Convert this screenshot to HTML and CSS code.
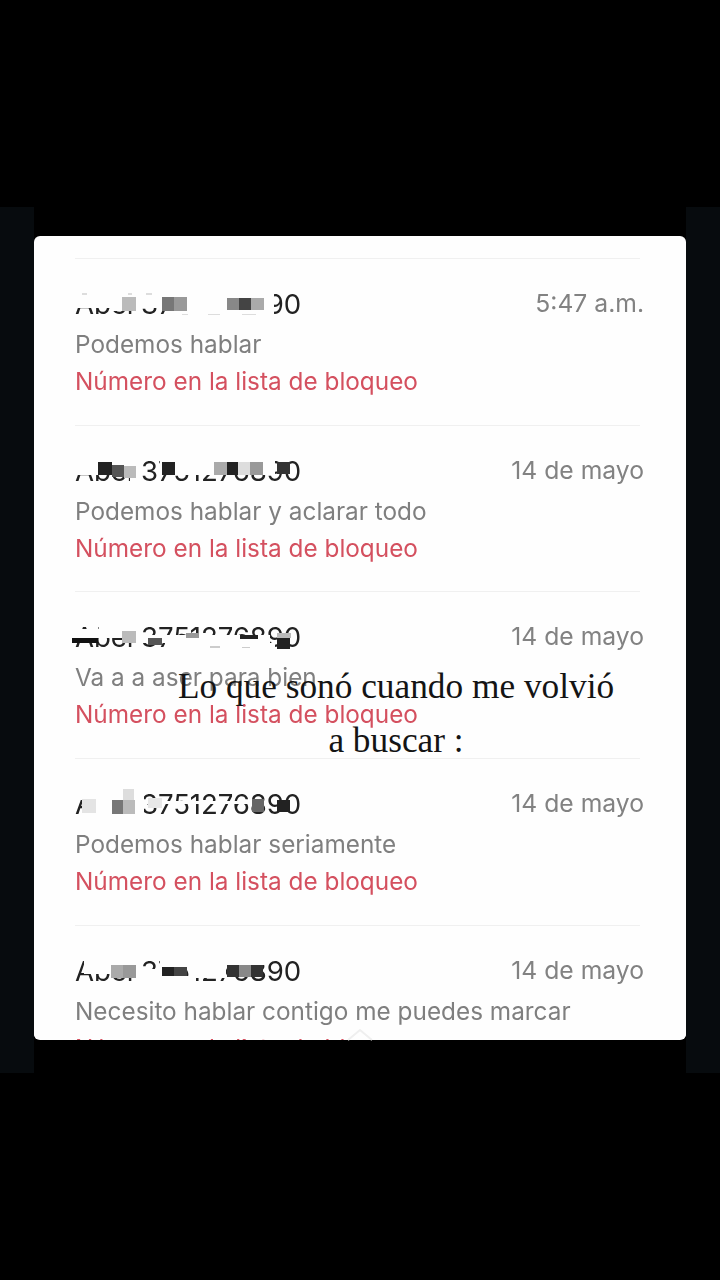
FILE: index.html
```html
<!DOCTYPE html>
<html lang="es">
<head>
<meta charset="utf-8">
<title>Lista de bloqueo</title>
<link rel="stylesheet" href="styles.css">
</head>
<body>
<main class="stage">
  <div class="band">
    <div class="side"></div>
    <div class="middle">
      <section class="card">
        <article class="row">
          <div class="head">
            <div class="name"><span class="num">Abel 3751276890</span>
              <svg class="mosaic" width="240" height="40" viewBox="0 0 240 40"><path fill="#fefefe" d="M0 0h204v11H0zM0 11h204v12H0zM105 23h99v10H105zM40 20h25v6H40z"/><path fill="#ddd" d="M12 8h5v2h-5zM58 8h4v2h-4zM76 8h6v2h-6zM138 29h12v1h-12zM112 29h6v1h-6zM172 29h14v1h-14z"/><rect x="52" y="12" width="14" height="14" fill="#bbb"/><rect x="92" y="12" width="12" height="14" fill="#777"/><rect x="104" y="12" width="13" height="14" fill="#999"/><rect x="157" y="13" width="12" height="12" fill="#888"/><rect x="169" y="13" width="12" height="12" fill="#444"/><rect x="181" y="13" width="13" height="12" fill="#aaa"/></svg></div>
            <time class="date">5:47 a.m.</time>
          </div>
          <p class="msg">Podemos hablar</p>
          <p class="blocked">Número en la lista de bloqueo</p>
        </article>
        <article class="row">
          <div class="head">
            <div class="name"><span class="num">Abel 3751276890</span>
              <svg class="mosaic" width="240" height="40" viewBox="0 0 240 40"><path fill="#fefefe" d="M0 0h72v23H0zM90 0h115v23H90zM60 23h12v6H60z"/><rect x="28" y="10" width="14" height="13" fill="#222"/><rect x="42" y="13" width="12" height="12" fill="#555"/><rect x="54" y="14" width="12" height="12" fill="#bbb"/><rect x="92" y="10" width="13" height="13" fill="#222"/><rect x="144" y="10" width="13" height="13" fill="#aaa"/><rect x="157" y="10" width="11" height="13" fill="#222"/><rect x="168" y="10" width="12" height="13" fill="#ddd"/><rect x="180" y="10" width="13" height="13" fill="#999"/><rect x="207" y="10" width="13" height="12" fill="#333"/></svg></div>
            <time class="date">14 de mayo</time>
          </div>
          <p class="msg">Podemos hablar y aclarar todo</p>
          <p class="blocked">Número en la lista de bloqueo</p>
        </article>
        <article class="row">
          <div class="head">
            <div class="name"><span class="num">Abel 3751276890</span>
              <svg class="mosaic" width="240" height="40" viewBox="0 0 240 40"><path fill="#fefefe" d="M0 11h70v9H0zM20 0h8v11h-8zM36 0h30v11H36zM70 17h130v8H70zM95 25h110v7H95z"/><rect x="2" y="20" width="26" height="5" fill="#111"/><rect x="52" y="13" width="14" height="12" fill="#bbb"/><rect x="78" y="20" width="14" height="7" fill="#555"/><rect x="116" y="15" width="13" height="5" fill="#999"/><rect x="170" y="17" width="18" height="4" fill="#222"/><rect x="207" y="20" width="13" height="11" fill="#222"/><rect x="207" y="15" width="14" height="5" fill="#bbb"/><path fill="#ccc" d="M140 28h10v2h-10zM172 29h8v1h-8z"/></svg></div>
            <time class="date">14 de mayo</time>
          </div>
          <p class="msg">Va a a aser para bien</p>
          <p class="blocked">Número en la lista de bloqueo</p>
        </article>
        <article class="row">
          <div class="head">
            <div class="name"><span class="num">Abel 3751276890</span>
              <svg class="mosaic" width="240" height="40" viewBox="0 0 240 40"><path fill="#fefefe" d="M13 4h61v32H13zM74 16h106v3H74zM0 4h13v11H0z"/><rect x="12" y="14" width="14" height="14" fill="#e4e4e4"/><rect x="42" y="15" width="11" height="14" fill="#777"/><rect x="53" y="4" width="11" height="11" fill="#ddd"/><rect x="53" y="15" width="12" height="14" fill="#bbb"/><rect x="78" y="13" width="14" height="10" fill="#e8e8e8"/><rect x="182" y="14" width="12" height="13" fill="#666"/><rect x="207" y="15" width="13" height="12" fill="#222"/></svg></div>
            <time class="date">14 de mayo</time>
          </div>
          <p class="msg">Podemos hablar seriamente</p>
          <p class="blocked">Número en la lista de bloqueo</p>
        </article>
        <article class="row">
          <div class="head">
            <div class="name"><span class="num">Abel 3751276890</span>
              <svg class="mosaic" width="240" height="40" viewBox="0 0 240 40"><path fill="#fefefe" d="M14 0h58v22H14zM72 17h18v14H72zM90 0h30v15H90zM90 24h32v8H90zM120 0h36v26h-36zM156 0h40v13h-40z"/><rect x="41" y="13" width="12" height="13" fill="#aaa"/><rect x="53" y="13" width="13" height="13" fill="#999"/><rect x="92" y="15" width="12" height="9" fill="#222"/><rect x="104" y="15" width="13" height="9" fill="#444"/><rect x="157" y="13" width="12" height="12" fill="#333"/><rect x="169" y="13" width="12" height="12" fill="#888"/><rect x="181" y="13" width="12" height="12" fill="#333"/></svg></div>
            <time class="date">14 de mayo</time>
          </div>
          <p class="msg">Necesito hablar contigo me puedes marcar</p>
          <p class="blocked">Número en la lista de bloqueo</p>
        </article>
      </section>
      <svg class="chevron" width="32" height="14" viewBox="0 0 32 14"><path d="M4 13 16 3l12 10" fill="none" stroke="#efefef" stroke-width="2"/></svg>
      <h1 class="caption">Lo que sonó cuando me volvió<br>a buscar :</h1>
    </div>
    <div class="side"></div>
  </div>
</main>
</body>
</html>
```
FILE: styles.css
```css
* { box-sizing: border-box; }
html, body { margin: 0; padding: 0; background: #000; }
.stage { height: 1280px; padding-top: 207px; background: #000; overflow: hidden; }
.band { display: flex; height: 866px; }
.side { width: 34px; background: #070b0e; }
.middle { position: relative; flex: 1; padding-top: 29px; background: #000; }
.card {
  position: relative;
  height: 804px;
  padding: 22px 42px 0 41px;
  overflow: hidden;
  border-radius: 6px;
  background: #fefefe;
  font-family: "Inter", sans-serif;
  filter: blur(.4px);
}
.card::after {
  content: "";
  position: absolute;
  left: 0;
  right: 0;
  bottom: 1px;
  height: 6px;
  background: #fefefe;
}
.row { height: 166.7px; padding-top: 27px; border-top: 1px solid #f0f0f0; margin-right: 4px; }
.head { display: flex; justify-content: space-between; align-items: center; height: 36px; margin-right: -4px; }
.name { position: relative; width: 240px; height: 36px; font-size: 27.6px; line-height: 36px; color: #222; white-space: nowrap; }
.num { letter-spacing: -.1px; }
.mosaic { position: absolute; left: -5px; top: -1px; }
.date { padding-bottom: 2px; font-size: 24.7px; line-height: 36px; color: #828282; }
.msg { margin: 4px 0 0; font-size: 24.35px; line-height: 36px; color: #7f7f7f; white-space: nowrap; }
.blocked { margin: 1px 0 0; font-size: 24.35px; line-height: 36px; color: #d4505f; white-space: nowrap; }
.chevron { position: absolute; left: 310px; top: 820px; }
.caption {
  position: absolute;
  left: 0;
  right: 0;
  top: 453px;
  margin: 0;
  padding-left: 72px;
  font-family: "Liberation Serif", serif;
  font-size: 35.3px;
  font-weight: 400;
  line-height: 54px;
  text-align: center;
  color: #141414;
}
```
